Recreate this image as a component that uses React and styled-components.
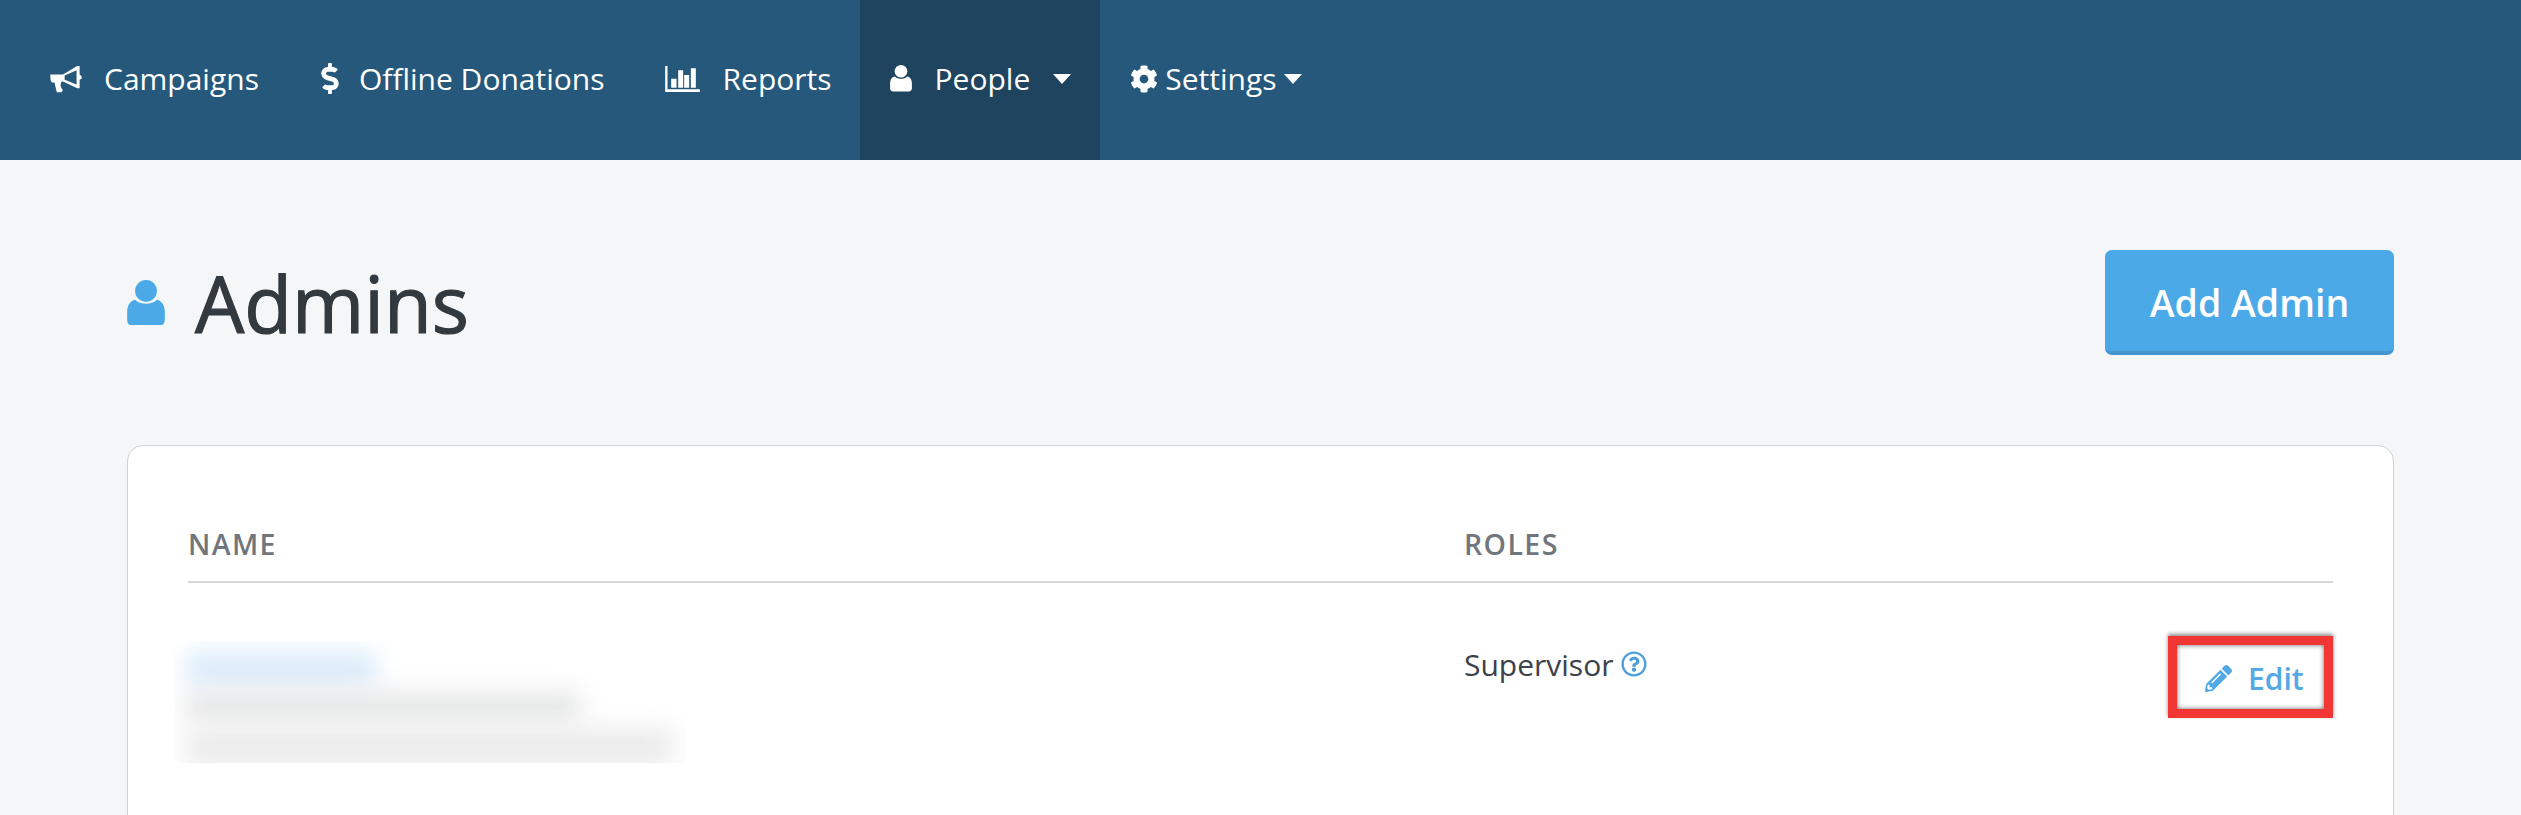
import React from "react";
import styled, { createGlobalStyle } from "styled-components";
import { FaDollarSign, FaCog, FaPencilAlt, FaRegQuestionCircle } from "react-icons/fa";

const GlobalStyle = createGlobalStyle`
  html, body {
    margin: 0;
    height: 100%;
    overflow: hidden;
    background: #f4f6f8;
    font-family: "Open Sans", "Liberation Sans", sans-serif;
  }
`;

const Page = styled.div`
  height: 100vh;
  overflow: hidden;
`;

const TopNav = styled.nav`
  height: 160px;
  display: flex;
  padding-left: 20px;
  background: #25587a;
  color: #fff;
`;

const NavItem = styled.div`
  display: flex;
  align-items: center;
  padding: 0 ${(p) => p.$right || 30}px 3px 30px;
  font-size: 30px;
  background: ${(p) => (p.$active ? "#1e4460" : "transparent")};
`;

const NavIcon = styled.span`
  display: flex;
  justify-content: center;
  width: ${(p) => p.$w}px;
  margin-right: ${(p) => p.$gap}px;
`;

const Caret = styled.span`
  width: 0;
  height: 0;
  margin-left: ${(p) => p.$gap}px;
  border-left: 9px solid transparent;
  border-right: 9px solid transparent;
  border-top: 10px solid #fff;
`;

const Content = styled.main`
  padding: 90px 127px 0;
`;

const TitleRow = styled.header`
  display: flex;
  justify-content: space-between;
  align-items: center;
  height: 105px;
  margin-bottom: 90px;
`;

const Title = styled.h1`
  display: flex;
  align-items: center;
  gap: 30px;
  margin: 0;
  font-size: 78px;
  font-weight: 500;
  -webkit-text-stroke: 1.2px #32393f;
  color: #32393f;
`;

const AddButton = styled.button`
  width: 289px;
  height: 105px;
  padding: 3px 0 0;
  border: none;
  border-bottom: 4px solid #4596cf;
  border-radius: 7px;
  background: #4ba9e8;
  color: #fff;
  font-family: inherit;
  font-size: 37.5px;
  font-weight: 600;
`;

const Card = styled.section`
  height: 600px;
  padding: 60px 60px 0;
  background: #fff;
  border: 1px solid #cfd2d5;
  border-radius: 16px;
`;

const HeadRow = styled.div`
  display: grid;
  grid-template-columns: 1276px 1fr;
  height: 75px;
  align-items: center;
  border-bottom: 2px solid #d4d6d8;
  font-size: 28.5px;
  font-weight: 600;
  letter-spacing: 1.4px;
  color: #70767b;
`;

const DataRow = styled.div`
  display: grid;
  grid-template-columns: 1276px 1fr auto;
  padding-top: 54px;
`;

const Contact = styled.div`
  width: 512px;
  height: 122px;
  margin: 4px 0 0 -14px;
  overflow: hidden;
`;

const BlurBar = styled.div`
  width: ${(p) => p.$w}px;
  height: ${(p) => p.$h}px;
  margin: ${(p) => p.$top}px 0 0 12px;
  background: ${(p) => p.$c};
  filter: blur(12px);
`;

const Role = styled.div`
  display: flex;
  align-items: center;
  gap: 8px;
  height: 54px;
  font-size: 30px;
  color: #3b4249;
  svg {
    color: #4d9fdb;
  }
`;

const EditButton = styled.button`
  display: flex;
  align-items: center;
  gap: 16px;
  width: 165px;
  height: 82px;
  margin-top: -1px;
  padding: 3px 0 0 28px;
  border: 9px solid #f23633;
  background: #fff;
  color: #52a9e6;
  font-family: inherit;
  font-size: 30px;
  font-weight: 600;
  box-shadow: 0 -2px 4px rgba(0, 0, 0, 0.45), inset 0 0 5px rgba(0, 0, 0, 0.6);
`;

const PersonIcon = ({ size, color }) => (
  <svg width={size} height={size * 1.2} viewBox="0 0 38 46" fill={color}>
    <circle cx="19" cy="11" r="11" />
    <path d="M8 20c3 3 7 4 11 4s8-1 11-4c5 1 8 6 8 12v8c0 4-2 6-6 6H6c-4 0-6-2-6-6v-8c0-6 3-11 8-12z" />
  </svg>
);

const HornIcon = () => (
  <svg width="32" height="28" viewBox="32 28 94 80" fill="#fff" fillRule="evenodd">
    <path d="M33 55H70L112 30H119V55L125 60V67L119 70V95H112L70 75H66C62 82 62 92 70 100L66 107H52L45 78H38C34 75 33 70 33 55ZM75 58L110 42V84L75 70Z" />
  </svg>
);

const BarsIcon = () => (
  <svg width="35" height="26" viewBox="28 30 104 78" fill="#fff">
    <path d="M28 30H35V100H132V108H28Z" />
    <path d="M46 68H62V95H46ZM67 43H82V95H67ZM85 57H100V95H85ZM105 37H120V95H105Z" />
  </svg>
);

const App = () => (
  <Page>
    <GlobalStyle />
    <TopNav>
      <NavItem>
        <NavIcon $w={32} $gap={22}>
          <HornIcon />
        </NavIcon>
        Campaigns
      </NavItem>
      <NavItem>
        <NavIcon $w={22} $gap={18}>
          <FaDollarSign size={31} />
        </NavIcon>
        Offline Donations
      </NavItem>
      <NavItem $right={28}>
        <NavIcon $w={36} $gap={22}>
          <BarsIcon />
        </NavIcon>
        Reports
      </NavItem>
      <NavItem $active $right={29}>
        <NavIcon $w={22} $gap={23}>
          <PersonIcon size={22} color="#fff" />
        </NavIcon>
        People
        <Caret $gap={23} />
      </NavItem>
      <NavItem $right={30}>
        <NavIcon $w={28} $gap={7}>
          <FaCog size={28} />
        </NavIcon>
        Settings
        <Caret $gap={7} />
      </NavItem>
    </TopNav>
    <Content>
      <TitleRow>
        <Title>
          <PersonIcon size={38} color="#4ba9e8" />
          Admins
        </Title>
        <AddButton>Add Admin</AddButton>
      </TitleRow>
      <Card>
        <HeadRow>
          <span>NAME</span>
          <span>ROLES</span>
        </HeadRow>
        <DataRow>
          <Contact>
            <BlurBar $w={190} $h={32} $c="#d8eafa" $top={12} />
            <BlurBar $w={394} $h={27} $c="#e3e4e5" $top={8} />
            <BlurBar $w={487} $h={38} $c="#ebebec" $top={8} />
          </Contact>
          <Role>
            Supervisor
            <FaRegQuestionCircle size={26} />
          </Role>
          <EditButton>
            <FaPencilAlt size={27} />
            Edit
          </EditButton>
        </DataRow>
      </Card>
    </Content>
  </Page>
);

export default App;
